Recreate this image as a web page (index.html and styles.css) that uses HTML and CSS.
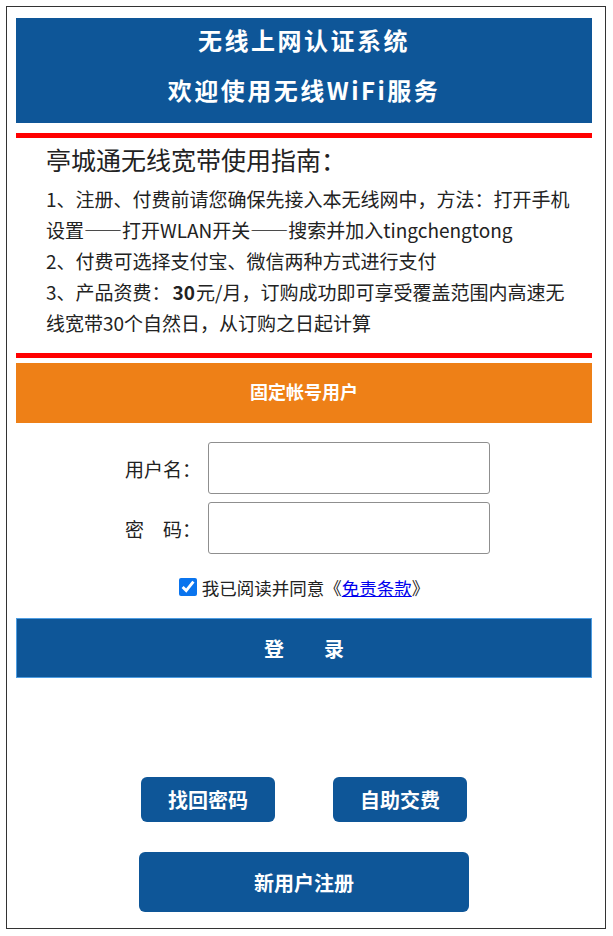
FILE: index.html
```html
<!DOCTYPE html>
<html lang="zh-CN">
<head>
<meta charset="utf-8">
<title>无线上网认证系统</title>
<link rel="stylesheet" href="styles.css">
</head>
<body>
<div class="page">
  <header class="banner">
    <div class="banner-line">无线上网认证系统</div>
    <div class="banner-line banner-line-2">欢迎使用无线WiFi服务</div>
  </header>
  <div class="rule"></div>
  <section class="guide">
    <h2 class="guide-title">亭城通无线宽带使用指南：</h2>
    <div class="guide-text">
      <p class="guide-item">1、注册、付费前请您确保先接入本无线网中，方法：打开手机设置——打开WLAN开关——搜索并加入tingchengtong</p>
      <p class="guide-item">2、付费可选择支付宝、微信两种方式进行支付</p>
      <p class="guide-item"><span>3、产品资费：</span><b class="price">30</b><span>元/月，订购成功即可享受覆盖范围内高速无</span><br><span>线宽带30个自然日，从订购之日起计算</span></p>
    </div>
  </section>
  <div class="rule rule-bottom"></div>
  <div class="tab">固定帐号用户</div>
  <form class="login-form" onsubmit="return false">
    <div class="field"><label class="field-label">用户名：</label><input class="field-input" type="text"></div>
    <div class="field field-2"><label class="field-label">密　码：</label><input class="field-input" type="password"></div>
    <div class="agree"><input class="agree-box" type="checkbox" checked><span>我已阅读并同意《<a class="agree-link" href="#">免责条款</a>》</span></div>
    <button class="login-btn" type="button">登　　录</button>
  </form>
  <div class="actions">
    <a class="action-btn" href="#">找回密码</a>
    <a class="action-btn" href="#">自助交费</a>
  </div>
  <a class="register-btn" href="#">新用户注册</a>
</div>
</body>
</html>
```
FILE: styles.css
```css
* { box-sizing: border-box; }
html, body { margin: 0; padding: 0; background: #fff; }
body {
  font-family: "Noto Sans CJK SC", "Noto Sans", sans-serif;
  color: #222;
}
.page {
  margin: 6px;
  width: 600px;
  height: 923px;
  border: 1px solid #333;
  padding: 11px 13px 0 9px;
}
.banner {
  height: 105px;
  background: #0e5698;
  color: #fff;
  font-weight: bold;
  font-size: 24px;
  letter-spacing: 2.5px;
  text-align: center;
}
.banner-line { line-height: 44px; }
.banner-line-2 { margin-top: 6px; }
.rule {
  margin-top: 10px;
  height: 5px;
  background: #ff0000;
}
.rule-bottom { margin-top: 15px; }
.guide { padding: 0 18px 0 30px; }
.guide-title {
  margin: 2px 0 0;
  font-size: 25px;
  font-weight: normal;
  line-height: 38px;
  color: #222;
}
.guide-text {
  margin: 5px 0 0;
  font-size: 19px;
  line-height: 31px;
}
.guide-item { margin: 0; }
.price { margin: 0 1px 0 2px; }
.tab {
  margin-top: 5px;
  height: 60px;
  background: #ee8017;
  color: #fff;
  font-weight: bold;
  font-size: 18px;
  line-height: 57px;
  text-align: center;
}
.login-form { margin: 19px 0 0; }
.field {
  display: flex;
  align-items: center;
  justify-content: center;
  padding-left: 7px;
}
.field-2 { margin-top: 8px; }
.field-label {
  width: 76px;
  margin-right: 7px;
  font-size: 19px;
  white-space: nowrap;
}
.field-input {
  width: 282px;
  height: 52px;
  border: 1px solid #8f8f8f;
  border-radius: 3px;
  margin: 0;
  padding: 0 8px;
  font-size: 18px;
}
.agree {
  margin-top: 21px;
  height: 24px;
  display: flex;
  align-items: center;
  justify-content: center;
  font-size: 17.5px;
  gap: 5px;
}
.agree-box {
  width: 18px;
  height: 18px;
  margin: 0;
  accent-color: #0a74ee;
}
.agree-link { color: #0000ee; text-decoration: underline; }
.login-btn {
  display: block;
  width: 100%;
  height: 60px;
  margin-top: 19px;
  background: #0e5698;
  border: 1px solid #4d9de2;
  color: #fff;
  font-family: inherit;
  font-weight: bold;
  font-size: 20px;
  padding: 0;
}
.actions {
  margin-top: 99px;
  display: flex;
  justify-content: center;
  gap: 58px;
}
.action-btn, .register-btn {
  display: flex;
  align-items: center;
  justify-content: center;
  background: #0e5698;
  color: #fff;
  font-weight: bold;
  font-size: 20px;
  text-decoration: none;
  border-radius: 6px;
}
.action-btn { width: 134px; height: 45px; }
.register-btn {
  width: 330px;
  height: 60px;
  margin: 30px auto 0;
}
```
